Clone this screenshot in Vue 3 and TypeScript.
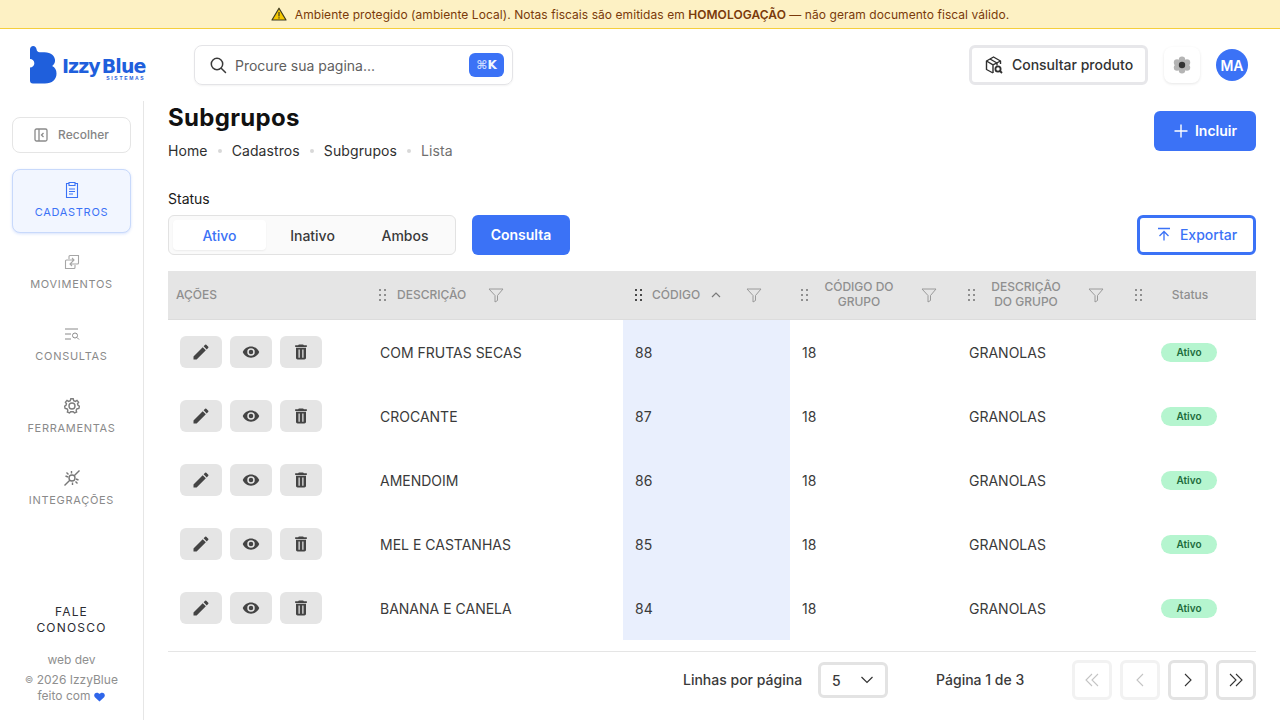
<script setup lang="ts">
interface Row {
  descricao: string
  codigo: number
}

const rows: Row[] = [
  { descricao: 'COM FRUTAS SECAS', codigo: 88 },
  { descricao: 'CROCANTE', codigo: 87 },
  { descricao: 'AMENDOIM', codigo: 86 },
  { descricao: 'MEL E CASTANHAS', codigo: 85 },
  { descricao: 'BANANA E CANELA', codigo: 84 },
]

const crumbs = ['Home', 'Cadastros', 'Subgrupos']
const statusTabs = ['Ativo', 'Inativo', 'Ambos']
const grip = [
  [1, 1], [6, 1], [1, 6], [6, 6], [1, 11], [6, 11],
]
</script>

<template>
  <div class="page">
    <div class="banner">
      <svg class="warn" width="16" height="14" viewBox="0 0 16 14">
        <path d="M8 1.2 15 13H1Z" fill="#f5c800" stroke="#3d3a20" stroke-width="1.2" stroke-linejoin="round" />
        <rect x="7.4" y="5" width="1.2" height="4.4" fill="#3d3a20" />
        <rect x="7.4" y="10.3" width="1.2" height="1.2" fill="#3d3a20" />
      </svg>
      <span>Ambiente protegido (ambiente Local). Notas fiscais são emitidas em <b>HOMOLOGAÇÃO</b> — não geram documento fiscal válido.</span>
    </div>

    <header class="topbar">
      <div class="logo">
        <svg width="27" height="38" viewBox="1 0 28 38" preserveAspectRatio="none">
          <path d="M1 3.500C1 1.500 2.500 0 4.300 0 6.200 0 7.500 1.400 7.800 3.200 8 5 9 6 11 6.200H16C23 6.400 27 10 27 14.500 27 17 25.500 19 24 20 27 21.500 28.500 24 28.500 27.500 28.500 33.500 24 37.500 16.500 37.500H4C2 37.500 1 36.500 1 34.500V21.500C3.500 21.500 5.500 19.500 5.500 17.200 5.500 15 3.500 13 1 13Z" fill="#1f5fdc" />
        </svg>
        <div class="logo-text">
          <div class="logo-name"><span class="izzy">Izzy</span><span>Blue</span></div>
          <div class="logo-sub">SISTEMAS</div>
        </div>
      </div>

      <div class="search">
        <svg width="18" height="18" viewBox="0 0 18 18" fill="none" stroke="#3a3a3a" stroke-width="1.5">
          <circle cx="8" cy="8" r="5.7" />
          <path d="m12.200 12.200 4.300 4.300" stroke-linecap="round" />
        </svg>
        <span class="search-text">Procure sua pagina...</span>
        <span class="kbd">⌘<b>K</b></span>
      </div>

      <div class="top-right">
        <button class="product-btn">
          <svg width="20" height="20" viewBox="0 0 20 20" fill="none" stroke="#2f2f2f" stroke-width="1.4" stroke-linejoin="round">
            <path d="M9 18 2.500 14.500V6L9.500 2 16.500 6V9" />
            <path d="M2.500 6 9 9.800 16.500 6M9 9.800V18M6 4 13 8V10.500" />
            <circle cx="14" cy="14" r="2.600" stroke-width="1.800" />
            <path d="m16 16 2 2" stroke-width="1.800" />
          </svg>
          Consultar produto
        </button>
        <div class="theme-btn">
          <svg width="18" height="18" viewBox="0 0 18 18">
            <g fill="#b4b4b4">
              <circle cx="9" cy="3.800" r="3.200" />
              <circle cx="9" cy="14.200" r="3.200" />
              <circle cx="4" cy="6.400" r="3.200" />
              <circle cx="14" cy="6.400" r="3.200" />
              <circle cx="4" cy="11.600" r="3.200" />
              <circle cx="14" cy="11.600" r="3.200" />
            </g>
            <circle cx="9" cy="9" r="3.200" fill="#333" />
          </svg>
        </div>
        <div class="avatar">MA</div>
      </div>
    </header>

    <div class="body">
      <aside class="sidebar">
        <button class="collapse">
          <svg width="14" height="14" viewBox="0 0 14 14" fill="none" stroke="#8a8a8a" stroke-width="1.300">
            <rect x="1" y="1" width="12" height="12" rx="1.500" />
            <path d="M5 1v12" />
            <path d="M9.500 5 7.500 7l2 2" />
          </svg>
          <span>Recolher</span>
        </button>

        <div class="nav-item active">
          <svg width="16" height="18" viewBox="0 0 16 18" fill="none" stroke="#3b72f6" stroke-width="1.100">
            <path d="M5 2.500H2.500V16.500H13.500V2.500H11" />
            <path d="M5 1.500H11V4.500H5Z" />
            <path d="M5 8H11M5 10.500H11M5 13H9" />
          </svg>
          <span>CADASTROS</span>
        </div>
        <div class="nav-item">
          <svg width="16" height="18" viewBox="0 -1 16 18" fill="none" stroke="#a6a6a6" stroke-width="1.100">
            <path d="M5 5V2.500A1 1 0 0 1 6 1.500H14.500V9A1 1 0 0 1 13.500 10H6M8 8 6 10l2 2" />
            <path d="M11 11V13.500A1 1 0 0 1 10 14.500H1.500V7A1 1 0 0 1 2.500 6H10M8 4l2 2-2 2" />
          </svg>
          <span>MOVIMENTOS</span>
        </div>
        <div class="nav-item">
          <svg width="16" height="18" viewBox="0 -1 16 18" fill="none" stroke="#8a8a8a" stroke-width="1">
            <path d="M1 3H14M1 8H7M1 13H7" />
            <circle cx="11" cy="9.500" r="2.500" />
            <path d="m13 11.500 2 2" />
          </svg>
          <span>CONSULTAS</span>
        </div>
        <div class="nav-item">
          <svg width="16" height="18" viewBox="0 -1 16 18" fill="none" stroke="#7d7d7d" stroke-width="1.400">
            <circle cx="8" cy="8" r="3" />
            <path d="M6.800.8H9.200L9.700 2.700 11.400 3.400 13 2.400 14.600 4.200 13.500 5.800 14 7.200 15.400 8.200 14.900 10.400 13.100 10.700 12.200 12.200 12.600 14 10.500 15 9.300 13.800H6.700L5.500 15 3.400 14 3.800 12.200 2.900 10.700 1.100 10.400.6 8.200 2 7.200 2.500 5.800 1.400 4.200 3 2.400 4.600 3.400 6.300 2.700Z" />
          </svg>
          <span>FERRAMENTAS</span>
        </div>
        <div class="nav-item">
          <svg width="16" height="18" viewBox="0 -1 16 18" fill="none" stroke="#777" stroke-width="1.400">
            <circle cx="8" cy="8" r="3" />
            <path d="M.5 15.500 5.800 10.200M10.200 5.800 15.500.5M7.500 1v2.500M1.500 6 4 7M2.500 2.500l2 2M12 9l2.500 1M11.500 11.500l2 2M8.500 12.500V15" />
          </svg>
          <span>INTEGRAÇÕES</span>
        </div>

        <div class="side-foot">
          <div class="contact">FALE<br>CONOSCO</div>
          <div class="dev">web dev</div>
          <div class="copy"><span class="reg">©</span> 2026 IzzyBlue</div>
          <div class="made">
            feito com
            <svg width="11" height="10" viewBox="0 0 11 10">
              <path d="M5.500 9.500.9 5.200C-.6 3.600.3.700 2.900.7 4 .7 5 1.300 5.500 2 6 1.300 7 .7 8.100.7c2.600 0 3.500 2.900 2 4.500Z" fill="#2f66ea" />
            </svg>
          </div>
        </div>
      </aside>

      <main class="content">
        <div class="head">
          <div>
            <h1>Subgrupos</h1>
            <nav class="crumbs">
              <template v-for="c in crumbs" :key="c">
                <span>{{ c }}</span>
                <i class="dot" />
              </template>
              <span class="last">Lista</span>
            </nav>
          </div>
          <button class="btn-primary include">
            <svg width="16" height="16" viewBox="0 0 16 16" stroke="#fff" stroke-width="1.400">
              <path d="M8 1.500v13M1.500 8h13" />
            </svg>
            Incluir
          </button>
        </div>

        <label class="status-label">Status</label>
        <div class="filters">
          <div class="tabs">
            <div v-for="(t, i) in statusTabs" :key="t" class="tab" :class="{ on: i === 0 }">{{ t }}</div>
          </div>
          <button class="btn-primary query">Consulta</button>
          <button class="export">
            <svg width="16" height="16" viewBox="0 0 16 16" fill="none" stroke="#3b72f6" stroke-width="1.300">
              <path d="M2 2.500h12M8 14.500V5.500M3.500 10 8 5.500l4.500 4.500" />
            </svg>
            Exportar
          </button>
        </div>

        <div class="table">
          <div class="tr th">
            <div class="cell c-actions"><span class="th-label">AÇÕES</span></div>
            <div class="cell c-desc">
              <svg class="grip" width="8" height="12" viewBox="0 0 8 12"><rect v-for="g in grip" :key="g.join()" :x="g[0] - 1" :y="g[1] - 1" width="2" height="2" /></svg>
              <span class="th-label">DESCRIÇÃO</span>
              <svg class="funnel f-desc" width="16" height="16" viewBox="0 0 16 16"><path d="M1 2h14L9.500 8.500v5L7 15V8.500Z" /></svg>
            </div>
            <div class="cell c-code">
              <svg class="grip dark" width="8" height="12" viewBox="0 0 8 12"><rect v-for="g in grip" :key="g.join()" :x="g[0] - 1" :y="g[1] - 1" width="2" height="2" /></svg>
              <span class="th-label">CÓDIGO</span>
              <svg class="sort" width="10" height="6" viewBox="0 0 10 6"><path d="M1 5 5 1l4 4" /></svg>
              <svg class="funnel push" width="16" height="16" viewBox="0 0 16 16"><path d="M1 2h14L9.500 8.500v5L7 15V8.500Z" /></svg>
            </div>
            <div class="cell c-group">
              <svg class="grip" width="8" height="12" viewBox="0 0 8 12"><rect v-for="g in grip" :key="g.join()" :x="g[0] - 1" :y="g[1] - 1" width="2" height="2" /></svg>
              <span class="th-label two">CÓDIGO DO GRUPO</span>
              <svg class="funnel push" width="16" height="16" viewBox="0 0 16 16"><path d="M1 2h14L9.500 8.500v5L7 15V8.500Z" /></svg>
            </div>
            <div class="cell c-gdesc">
              <svg class="grip" width="8" height="12" viewBox="0 0 8 12"><rect v-for="g in grip" :key="g.join()" :x="g[0] - 1" :y="g[1] - 1" width="2" height="2" /></svg>
              <span class="th-label two">DESCRIÇÃO DO GRUPO</span>
              <svg class="funnel push" width="16" height="16" viewBox="0 0 16 16"><path d="M1 2h14L9.500 8.500v5L7 15V8.500Z" /></svg>
            </div>
            <div class="cell c-status">
              <svg class="grip" width="8" height="12" viewBox="0 0 8 12"><rect v-for="g in grip" :key="g.join()" :x="g[0] - 1" :y="g[1] - 1" width="2" height="2" /></svg>
              <span class="th-status">Status</span>
            </div>
          </div>

          <div v-for="r in rows" :key="r.codigo" class="tr">
            <div class="cell c-actions acts">
              <button class="act">
                <svg width="20" height="20" viewBox="0 0 24 24" fill="#444"><path d="M3 17.250V21h3.750L17.810 9.940l-3.750-3.750L3 17.250zM20.710 7.040a1 1 0 0 0 0-1.410l-2.340-2.340a1 1 0 0 0-1.410 0l-1.830 1.830 3.750 3.750 1.830-1.830z" /></svg>
              </button>
              <button class="act">
                <svg width="18" height="18" viewBox="0 0 24 24" fill="#444"><path d="M12 4.500C7 4.500 2.730 7.610 1 12c1.730 4.390 6 7.500 11 7.500s9.270-3.110 11-7.500c-1.730-4.390-6-7.500-11-7.500zM12 17a5 5 0 1 1 0-10 5 5 0 0 1 0 10zm0-8a3 3 0 1 0 0 6 3 3 0 0 0 0-6z" /></svg>
              </button>
              <button class="act">
                <svg width="20" height="20" viewBox="0 0 24 24" fill="#444"><path d="M6 19c0 1.100.9 2 2 2h8c1.100 0 2-.9 2-2V7H6v12zM9 9h1.500v10H9zm4.500 0H15v10h-1.500zM15.500 4l-1-1h-5l-1 1H5v2h14V4z" /></svg>
              </button>
            </div>
            <div class="cell c-desc td">{{ r.descricao }}</div>
            <div class="cell c-code td sorted">{{ r.codigo }}</div>
            <div class="cell c-group td">18</div>
            <div class="cell c-gdesc td">GRANOLAS</div>
            <div class="cell c-status td"><span class="badge">Ativo</span></div>
          </div>
        </div>

        <div class="pager">
          <span class="pager-text">Linhas por página</span>
          <div class="per-page">
            <span>5</span>
            <svg width="14" height="8" viewBox="0 0 14 8" fill="none" stroke="#333" stroke-width="1.200"><path d="m1.500 1 5.500 5.500L12.500 1" /></svg>
          </div>
          <span class="pager-text page-info">Página 1 de 3</span>
          <div class="page-btns">
            <button class="pg off"><svg width="16" height="16" viewBox="0 0 16 16"><path d="M8 2 2 8l6 6M14 2 8 8l6 6" /></svg></button>
            <button class="pg off"><svg width="16" height="16" viewBox="0 0 16 16"><path d="M11 2 5 8l6 6" /></svg></button>
            <button class="pg"><svg width="16" height="16" viewBox="0 0 16 16"><path d="m5 2 6 6-6 6" /></svg></button>
            <button class="pg"><svg width="16" height="16" viewBox="0 0 16 16"><path d="m2 2 6 6-6 6M8 2l6 6-6 6" /></svg></button>
          </div>
        </div>
      </main>
    </div>
  </div>
</template>

<style scoped>
.page {
  width: 1280px;
  height: 720px;
  overflow: hidden;
  background: #fff;
  color: #333;
  font-family: Inter, "Noto Sans", sans-serif;
  display: flex;
  flex-direction: column;
}

button {
  font-family: inherit;
  cursor: pointer;
}

.banner {
  height: 28px;
  flex: none;
  box-sizing: content-box;
  border-bottom: 1px solid #f5cf3c;
  background: #fdf1c4;
  color: #7a3a0a;
  font-size: 12px;
  letter-spacing: 0.06px;
  display: flex;
  align-items: center;
  justify-content: center;
  gap: 8px;
}

.banner b {
  font-weight: 600;
}

.topbar {
  height: 72px;
  flex: none;
  display: flex;
  align-items: center;
  padding: 0 32px 0 30px;
}

.logo {
  width: 164px;
  display: flex;
  align-items: flex-end;
  gap: 5px;
  color: #1f5fdc;
}

.logo-text {
  padding-bottom: 3px;
}

.logo-name {
  font-family: "DejaVu Sans", sans-serif;
  font-size: 19px;
  font-weight: 700;
  letter-spacing: -0.95px;
  line-height: 18px;
}

.izzy {
  margin-right: 2px;
}

.logo-sub {
  font-family: "Liberation Sans", sans-serif;
  font-size: 5px;
  font-weight: 700;
  letter-spacing: 1.7px;
  line-height: 6px;
  text-align: right;
}

.search {
  width: 319px;
  height: 40px;
  box-sizing: border-box;
  border: 1px solid #e4e4e7;
  border-radius: 8px;
  box-shadow: 0 1px 2px rgba(0, 0, 0, 0.05);
  display: flex;
  align-items: center;
  padding: 0 8px 0 14px;
  gap: 8px;
}

.search-text {
  flex: 1;
  font-size: 14px;
  color: #5f5f5f;
}

.kbd {
  width: 35px;
  height: 24px;
  border-radius: 6px;
  background: #3b72f6;
  color: #c9d9ff;
  font-family: "DejaVu Sans", sans-serif;
  font-size: 12px;
  font-weight: 700;
  display: flex;
  align-items: center;
  justify-content: center;
}

.kbd b {
  color: #f2f6ff;
}

.top-right {
  margin-left: auto;
  display: flex;
  align-items: center;
}

.product-btn {
  width: 179px;
  height: 40px;
  box-sizing: border-box;
  border: 3px solid #e7e7ea;
  border-radius: 6px;
  background: #fff;
  color: #333;
  font-size: 14px;
  font-weight: 500;
  display: flex;
  align-items: center;
  justify-content: center;
  gap: 8px;
  padding: 0 0 1px;
}

.theme-btn {
  width: 36px;
  height: 36px;
  margin-left: 16px;
  border-radius: 8px;
  box-shadow: 0 1px 3px rgba(0, 0, 0, 0.1);
  display: flex;
  align-items: center;
  justify-content: center;
}

.avatar {
  width: 32px;
  height: 32px;
  margin-left: 16px;
  border-radius: 50%;
  background: #3b72f6;
  color: #fff;
  font-size: 14px;
  font-weight: 600;
  display: flex;
  align-items: center;
  justify-content: center;
}

.body {
  flex: 1;
  min-height: 0;
  display: flex;
}

.sidebar {
  width: 144px;
  flex: none;
  box-sizing: border-box;
  border-right: 1px solid #e6e6e6;
  padding: 16px 12px 0;
  display: flex;
  flex-direction: column;
  align-items: center;
}

.collapse {
  width: 119px;
  height: 36px;
  flex: none;
  box-sizing: border-box;
  border: 1px solid #e5e5e5;
  border-radius: 8px;
  background: #fff;
  color: #858585;
  font-size: 12px;
  font-weight: 500;
  display: flex;
  align-items: center;
  justify-content: center;
  gap: 10px;
  margin-bottom: 16px;
}

.collapse span {
  margin-top: -1px;
}

.nav-item {
  width: 119px;
  height: 64px;
  flex: none;
  box-sizing: border-box;
  margin-bottom: 8px;
  padding-bottom: 2px;
  border-radius: 8px;
  border: 1px solid transparent;
  color: #8a8a8a;
  font-size: 11px;
  font-weight: 400;
  letter-spacing: 0.7px;
  display: flex;
  flex-direction: column;
  align-items: center;
  justify-content: center;
  gap: 6px;
}

.nav-item.active {
  background: #f2f6ff;
  border-color: #c8d9fb;
  box-shadow: 0 1px 3px rgba(59, 114, 246, 0.2);
  color: #3b72f6;
}

.side-foot {
  margin-top: auto;
  padding-bottom: 16px;
  text-align: center;
  color: #8f8f8f;
  font-size: 12px;
}

.contact {
  color: #2b2b33;
  letter-spacing: 1.2px;
  line-height: 16px;
  margin-bottom: 16px;
}

.dev,
.copy,
.made {
  line-height: 16px;
}

.dev {
  margin-bottom: 4px;
}

.copy {
  white-space: nowrap;
}

.reg {
  font-size: 9px;
  vertical-align: 1px;
}

.made {
  display: flex;
  align-items: center;
  justify-content: center;
  gap: 4px;
}

.made svg {
  margin-top: 2px;
}

.content {
  flex: 1;
  min-width: 0;
  padding: 0 24px;
  display: flex;
  flex-direction: column;
}

.head {
  height: 70px;
  flex: none;
  display: flex;
  justify-content: space-between;
  align-items: flex-start;
}

h1 {
  margin: 2px 0 0;
  color: #111;
  font-size: 24px;
  font-weight: 700;
  line-height: 30px;
  letter-spacing: 0.3px;
}

.crumbs {
  margin-top: 9px;
  display: flex;
  align-items: center;
  font-size: 14px;
  line-height: 18px;
  letter-spacing: 0.1px;
  color: #2f2f2f;
}

.dot {
  width: 4px;
  height: 4px;
  margin: 0 10px;
  border-radius: 50%;
  background: #d8d8d8;
}

.last {
  color: #6f6f6f;
}

.btn-primary {
  border: 0;
  border-radius: 6px;
  background: #3b72f6;
  color: #fff;
  font-size: 14px;
  font-weight: 600;
  padding: 0 0 2px;
  display: flex;
  align-items: center;
  justify-content: center;
}

.include {
  width: 102px;
  height: 40px;
  margin-top: 10px;
  gap: 6px;
}

.include svg {
  margin-top: 2px;
}

.status-label {
  margin-top: 19px;
  color: #1a1a1a;
  font-size: 14px;
  line-height: 18px;
}

.filters {
  margin-top: 7px;
  height: 40px;
  flex: none;
  display: flex;
  align-items: center;
}

.tabs {
  width: 288px;
  height: 40px;
  box-sizing: border-box;
  border: 1px solid #e2e2e2;
  border-radius: 6px;
  background: #fafafa;
  padding: 4px;
  display: grid;
  grid-template-columns: 93px 93px 1fr;
}

.tab {
  display: flex;
  align-items: center;
  justify-content: center;
  color: #3a3a3a;
  font-size: 14px;
  font-weight: 500;
  border-radius: 4px;
}

.tab.on {
  background: #fff;
  color: #3b72f6;
  box-shadow: 0 1px 2px rgba(0, 0, 0, 0.06);
}

.query {
  width: 98px;
  height: 40px;
  margin-left: 16px;
}

.export {
  width: 119px;
  height: 40px;
  margin-left: auto;
  box-sizing: border-box;
  border: 3px solid #3b72f6;
  border-radius: 6px;
  background: #fff;
  color: #3b72f6;
  font-size: 14px;
  font-weight: 500;
  padding: 0 0 2px;
  display: flex;
  align-items: center;
  justify-content: center;
  gap: 8px;
}

.table {
  margin-top: 16px;
  flex: none;
  border-bottom: 1px solid #e5e5e5;
  padding-bottom: 11px;
}

.tr {
  display: grid;
  box-sizing: border-box;
  grid-template-columns: 200px 255px 167px 167px 167px 132px;
  height: 64px;
}

.tr.th {
  height: 49px;
  background: #e5e5e5;
  border-bottom: 1px solid #dcdcdc;
  color: #8f8f8f;
  font-size: 12px;
  font-weight: 500;
}

.cell {
  display: flex;
  align-items: center;
  padding: 0 12px;
  min-width: 0;
}

.th .c-actions {
  padding-left: 8px;
}

.grip {
  flex: none;
  fill: #8f8f8f;
  margin-left: -1px;
  margin-right: 10px;
}

.c-group .grip,
.c-gdesc .grip {
  margin-right: 12px;
}

.grip.dark {
  fill: #4a4a4a;
  margin-left: 0;
  margin-right: 9px;
}

.th-label {
  line-height: 15px;
  margin-top: -2px;
}

.th-label.two {
  width: 76px;
  text-align: center;
}

.funnel {
  flex: none;
  fill: none;
  stroke: #9a9a9a;
  stroke-width: 1;
}

.f-desc {
  margin-left: 22px;
}

.push {
  margin-left: auto;
  margin-right: 8px;
}

.c-code .push {
  margin-right: 16px;
}

.sort {
  margin-left: 11px;
  fill: none;
  stroke: #7a7a7a;
  stroke-width: 1.200;
}

.th-status {
  width: 76px;
  text-align: center;
  margin: -2px 0 0 -1px;
}

.td {
  color: #3a3a3a;
  font-size: 14px;
}

.sorted {
  background: #e9effd;
}

.acts {
  gap: 8px;
}

.act {
  width: 42px;
  height: 32px;
  padding: 0;
  border: 0;
  border-radius: 6px;
  background: #e5e5e5;
  display: flex;
  align-items: center;
  justify-content: center;
}

.c-status.td {
  padding-left: 37px;
}

.badge {
  width: 56px;
  height: 19px;
  border-radius: 10px;
  background: #b5f5cf;
  color: #1e6b3c;
  font-size: 10px;
  font-weight: 600;
  display: flex;
  align-items: center;
  justify-content: center;
}

.pager {
  margin-top: 8px;
  display: flex;
  align-items: center;
  color: #3a3a3a;
  font-size: 14px;
  font-weight: 500;
  padding-left: 515px;
}

.pager-text {
  margin-top: -2px;
}

.per-page {
  width: 70px;
  height: 36px;
  box-sizing: border-box;
  margin-left: 16px;
  border: 3px solid #e3e3e3;
  border-radius: 6px;
  padding: 0 11px;
  display: flex;
  align-items: center;
  justify-content: space-between;
}

.page-info {
  margin-left: 48px;
}

.page-btns {
  margin-left: auto;
  display: flex;
  gap: 8px;
}

.pg {
  width: 40px;
  height: 40px;
  padding: 0;
  box-sizing: border-box;
  border: 3px solid #e3e3e3;
  border-radius: 6px;
  background: #fff;
  display: flex;
  align-items: center;
  justify-content: center;
}

.pg svg {
  fill: none;
  stroke: #333;
  stroke-width: 1.100;
}

.pg.off {
  border-color: #f2f2f2;
}

.pg.off svg {
  stroke: #c4c4c4;
}
</style>

<style>
html,
body {
  margin: 0;
  background: #fff;
}
</style>
